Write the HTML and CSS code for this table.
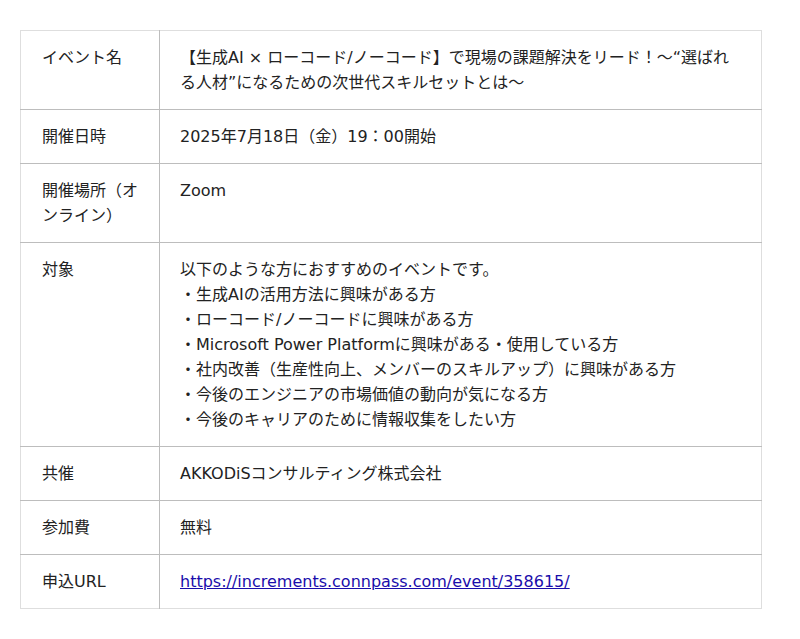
FILE: index.html
```html
<!DOCTYPE html>
<html lang="ja">
<head>
<meta charset="utf-8">
<link rel="stylesheet" href="styles.css">
</head>
<body>
<div class="wrap">
<table class="info">
<tr><th>イベント名</th><td>【生成AI × ローコード/ノーコード】で現場の課題解決をリード！～“選ばれる人材”になるための次世代スキルセットとは～</td></tr>
<tr><th>開催日時</th><td>2025年7月18日（金）19：00開始</td></tr>
<tr><th>開催場所（オンライン）</th><td>Zoom</td></tr>
<tr><th>対象</th><td>以下のような方におすすめのイベントです。<br>・生成AIの活用方法に興味がある方<br>・ローコード/ノーコードに興味がある方<br>・Microsoft Power Platformに興味がある・使用している方<br>・社内改善（生産性向上、メンバーのスキルアップ）に興味がある方<br>・今後のエンジニアの市場価値の動向が気になる方<br>・今後のキャリアのために情報収集をしたい方</td></tr>
<tr><th>共催</th><td>AKKODiSコンサルティング株式会社</td></tr>
<tr><th>参加費</th><td>無料</td></tr>
<tr><th>申込URL</th><td><a href="https://increments.connpass.com/event/358615/">https://increments.connpass.com/event/358615/</a></td></tr>
</table>
</div>
</body>
</html>
```
FILE: styles.css
```css
html, body {
  margin: 0;
  background: #fff;
}
body {
  font-family: "DejaVu Sans", "Noto Sans CJK JP", sans-serif;
  font-size: 16px;
  line-height: 25px;
  color: #222;
}
.wrap {
  padding: 30px 38px 0 20px;
}
.info {
  width: 742px;
  border-collapse: collapse;
  border: 1px solid #dedede;
}
.info th,
.info td {
  text-align: left;
  vertical-align: top;
  font-weight: normal;
  padding: 14px 20px 14px 20px;
  border-top: 1px solid #bdbdbd;
}
.info tr:first-child th,
.info tr:first-child td {
  border-top: none;
}
.info th {
  width: 97px;
  border-right: 1px solid #bdbdbd;
  padding-left: 21px;
}
.info td {
  padding-left: 20px;
}
.info a {
  color: #1a0dab;
}
```
